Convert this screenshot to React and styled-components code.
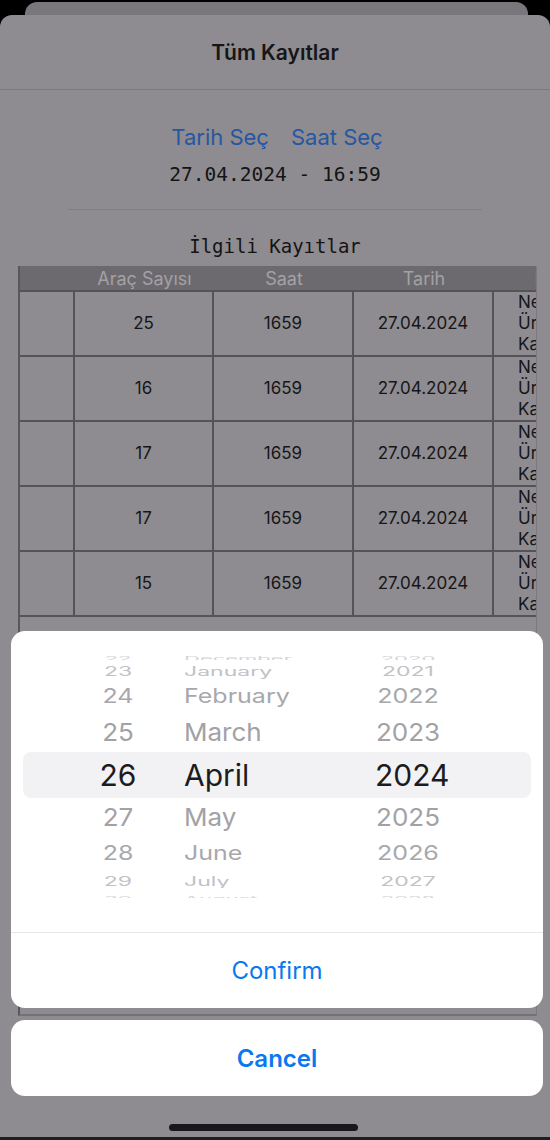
import React from 'react'
import styled, { createGlobalStyle } from 'styled-components'

const GlobalStyle = createGlobalStyle`
  html, body {
    margin: 0;
    padding: 0;
    background: #000;
  }
  body {
    font-family: Inter, "Noto Sans", sans-serif;
  }
`

const Screen = styled.div`
  position: relative;
  width: 550px;
  height: 1140px;
  overflow: hidden;
  background: #000;
  display: flex;
  flex-direction: column;
`

const BackCard = styled.div`
  flex: none;
  height: 13px;
  margin: 2px 22px 0 25px;
  background: #79777b;
  border-radius: 12px 12px 0 0;
`

const Sheet = styled.div`
  flex: 1;
  display: flex;
  flex-direction: column;
  background: #8e8c90;
  border-radius: 12px 12px 0 0;
  overflow: hidden;
`

const Header = styled.div`
  flex: none;
  height: 75px;
  display: flex;
  align-items: center;
  justify-content: center;
  border-bottom: 1px solid #7b797d;
  box-sizing: border-box;
`

const Title = styled.h1`
  margin: 0;
  font-size: 21px;
  font-weight: 600;
  color: #161618;
`

const Body = styled.div`
  flex: 1;
  display: flex;
  flex-direction: column;
  align-items: center;
`

const ActionsRow = styled.div`
  margin-top: 35px;
  display: flex;
  gap: 22px;
  padding-left: 4px;
`

const LinkButton = styled.span`
  font-size: 22px;
  line-height: 24px;
  color: #2657a1;
`

const MonoText = styled.div`
  margin-top: ${p => p.$top}px;
  font-family: "DejaVu Sans Mono", "Liberation Mono", monospace;
  font-size: ${p => p.$size}px;
  line-height: 24px;
  color: #141414;
`

const Divider = styled.div`
  margin-top: 22px;
  width: 414px;
  height: 1px;
  background: #807e82;
`

const TableWrap = styled.div`
  flex: none;
  height: 750px;
  box-sizing: border-box;
  margin-top: 8px;
  align-self: stretch;
  margin-left: 18px;
  margin-right: 13px;
  overflow: hidden;
  border-left: 2px solid #59575b;
  border-right: 1px solid #7c7a7e;
  border-bottom: 2px solid #737175;
`

const cols = '55px 139px 140px 140px 140px'

const HeadRow = styled.div`
  display: grid;
  grid-template-columns: ${cols};
  height: 24px;
  background: #6c6a6e;
  width: max-content;
  min-width: 100%;
`

const HeadCell = styled.div`
  display: flex;
  align-items: center;
  justify-content: center;
  font-size: 18px;
  color: #a3a1a5;
  white-space: nowrap;
`

const Rows = styled.div`
  border-top: 2px solid #555357;
  width: max-content;
`

const Row = styled.div`
  display: grid;
  grid-template-columns: ${cols};
  height: 65px;
  border-bottom: 2px solid #555357;
  box-sizing: border-box;
`

const Cell = styled.div`
  display: flex;
  align-items: center;
  justify-content: ${p => (p.$left ? 'flex-start' : 'center')};
  padding-left: ${p => (p.$left ? '24px' : '0')};
  border-right: 2px solid #555357;
  font-size: 17px;
  line-height: 21px;
  color: #161618;
  white-space: pre-line;
  &:last-child {
    border-right: none;
  }
`

const BottomStrip = styled.div`
  flex: none;
  height: 3px;
  background: #1d1d22;
`

const ActionSheet = styled.div`
  position: absolute;
  left: 11px;
  right: 7px;
  bottom: 44px;
  display: flex;
  flex-direction: column;
  gap: 12px;
`

const Card = styled.div`
  background: #fff;
  border-radius: 14px;
  overflow: hidden;
`

const Wheel = styled.div`
  height: 301px;
  box-sizing: border-box;
  padding: 17px 12px 0;
  overflow: hidden;
`

const WheelRow = styled.div`
  height: ${p => p.$h}px;
  display: grid;
  grid-template-columns: 70px 160px 66px;
  column-gap: 31px;
  padding-left: 60px;
  align-items: center;
  overflow: hidden;
  border-radius: 8px;
  background: ${p => (p.$selected ? '#f2f2f4' : 'transparent')};
  font-size: ${p => p.$size}px;
  color: ${p => p.$color};
  line-height: 1;
  & > span {
    display: block;
    white-space: nowrap;
    transform: scaleY(${p => p.$scale});
  }
`

const Day = styled.span`
  text-align: center;
`

const Month = styled.span`
  text-align: left;
`

const Year = styled.span`
  text-align: center;
`

const SheetButton = styled.div`
  height: ${p => p.$h}px;
  display: flex;
  align-items: center;
  justify-content: center;
  font-size: 24px;
  font-weight: ${p => (p.$bold ? 600 : 400)};
  color: #0a78ee;
  border-top: ${p => (p.$divided ? '1px solid #e8e8ec' : 'none')};
`

const HomeIndicator = styled.div`
  position: absolute;
  left: 169px;
  top: 1124px;
  width: 189px;
  height: 7px;
  border-radius: 4px;
  background: #18181a;
`

const records = [
  { count: 25, time: '1659', date: '27.04.2024' },
  { count: 16, time: '1659', date: '27.04.2024' },
  { count: 17, time: '1659', date: '27.04.2024' },
  { count: 17, time: '1659', date: '27.04.2024' },
  { count: 15, time: '1659', date: '27.04.2024' },
]

const wheelRows = [
  { d: '22', m: 'December', y: '2020', h: 12, size: 22, scale: 0.3, color: '#d4d4d8' },
  { d: '23', m: 'January', y: '2021', h: 20, size: 23, scale: 0.55, color: '#c2c2c6' },
  { d: '24', m: 'February', y: '2022', h: 32, size: 25, scale: 0.8, color: '#a8a8ac' },
  { d: '25', m: 'March', y: '2023', h: 40, size: 26, scale: 0.95, color: '#a2a2a6' },
  { d: '26', m: 'April', y: '2024', h: 46, size: 30, scale: 1, color: '#1c1c1e', selected: true },
  { d: '27', m: 'May', y: '2025', h: 38, size: 26, scale: 0.95, color: '#a2a2a6' },
  { d: '28', m: 'June', y: '2026', h: 34, size: 25, scale: 0.8, color: '#a8a8ac' },
  { d: '29', m: 'July', y: '2027', h: 18, size: 23, scale: 0.55, color: '#c2c2c6' },
  { d: '30', m: 'August', y: '2028', h: 10, size: 22, scale: 0.3, color: '#d4d4d8' },
]

const App = () => {
  return (
    <Screen>
      <GlobalStyle />
      <BackCard />
      <Sheet>
        <Header>
          <Title>Tüm Kayıtlar</Title>
        </Header>
        <Body>
          <ActionsRow>
            <LinkButton>Tarih Seç</LinkButton>
            <LinkButton>Saat Seç</LinkButton>
          </ActionsRow>
          <MonoText $top={14} $size={19.5}>27.04.2024 - 16:59</MonoText>
          <Divider />
          <MonoText $top={24} $size={19}>İlgili Kayıtlar</MonoText>
          <TableWrap>
            <HeadRow>
              <HeadCell />
              <HeadCell>Araç Sayısı</HeadCell>
              <HeadCell>Saat</HeadCell>
              <HeadCell>Tarih</HeadCell>
              <HeadCell>Konum</HeadCell>
            </HeadRow>
            <Rows>
              {records.map((r, i) => (
                <Row key={i}>
                  <Cell />
                  <Cell>{r.count}</Cell>
                  <Cell>{r.time}</Cell>
                  <Cell>{r.date}</Cell>
                  <Cell $left>{'Netice\nÜrün\nKayıt'}</Cell>
                </Row>
              ))}
            </Rows>
          </TableWrap>
        </Body>
      </Sheet>
      <BottomStrip />

      <ActionSheet>
        <Card>
          <Wheel>
            {wheelRows.map(r => (
              <WheelRow
                key={r.d}
                $h={r.h}
                $size={r.size}
                $scale={r.scale}
                $color={r.color}
                $selected={r.selected}
              >
                <Day>{r.d}</Day>
                <Month>{r.m}</Month>
                <Year>{r.y}</Year>
              </WheelRow>
            ))}
          </Wheel>
          <SheetButton $h={75} $divided>Confirm</SheetButton>
        </Card>
        <Card>
          <SheetButton $h={76} $bold>Cancel</SheetButton>
        </Card>
      </ActionSheet>
      <HomeIndicator />
    </Screen>
  )
}

export default App
